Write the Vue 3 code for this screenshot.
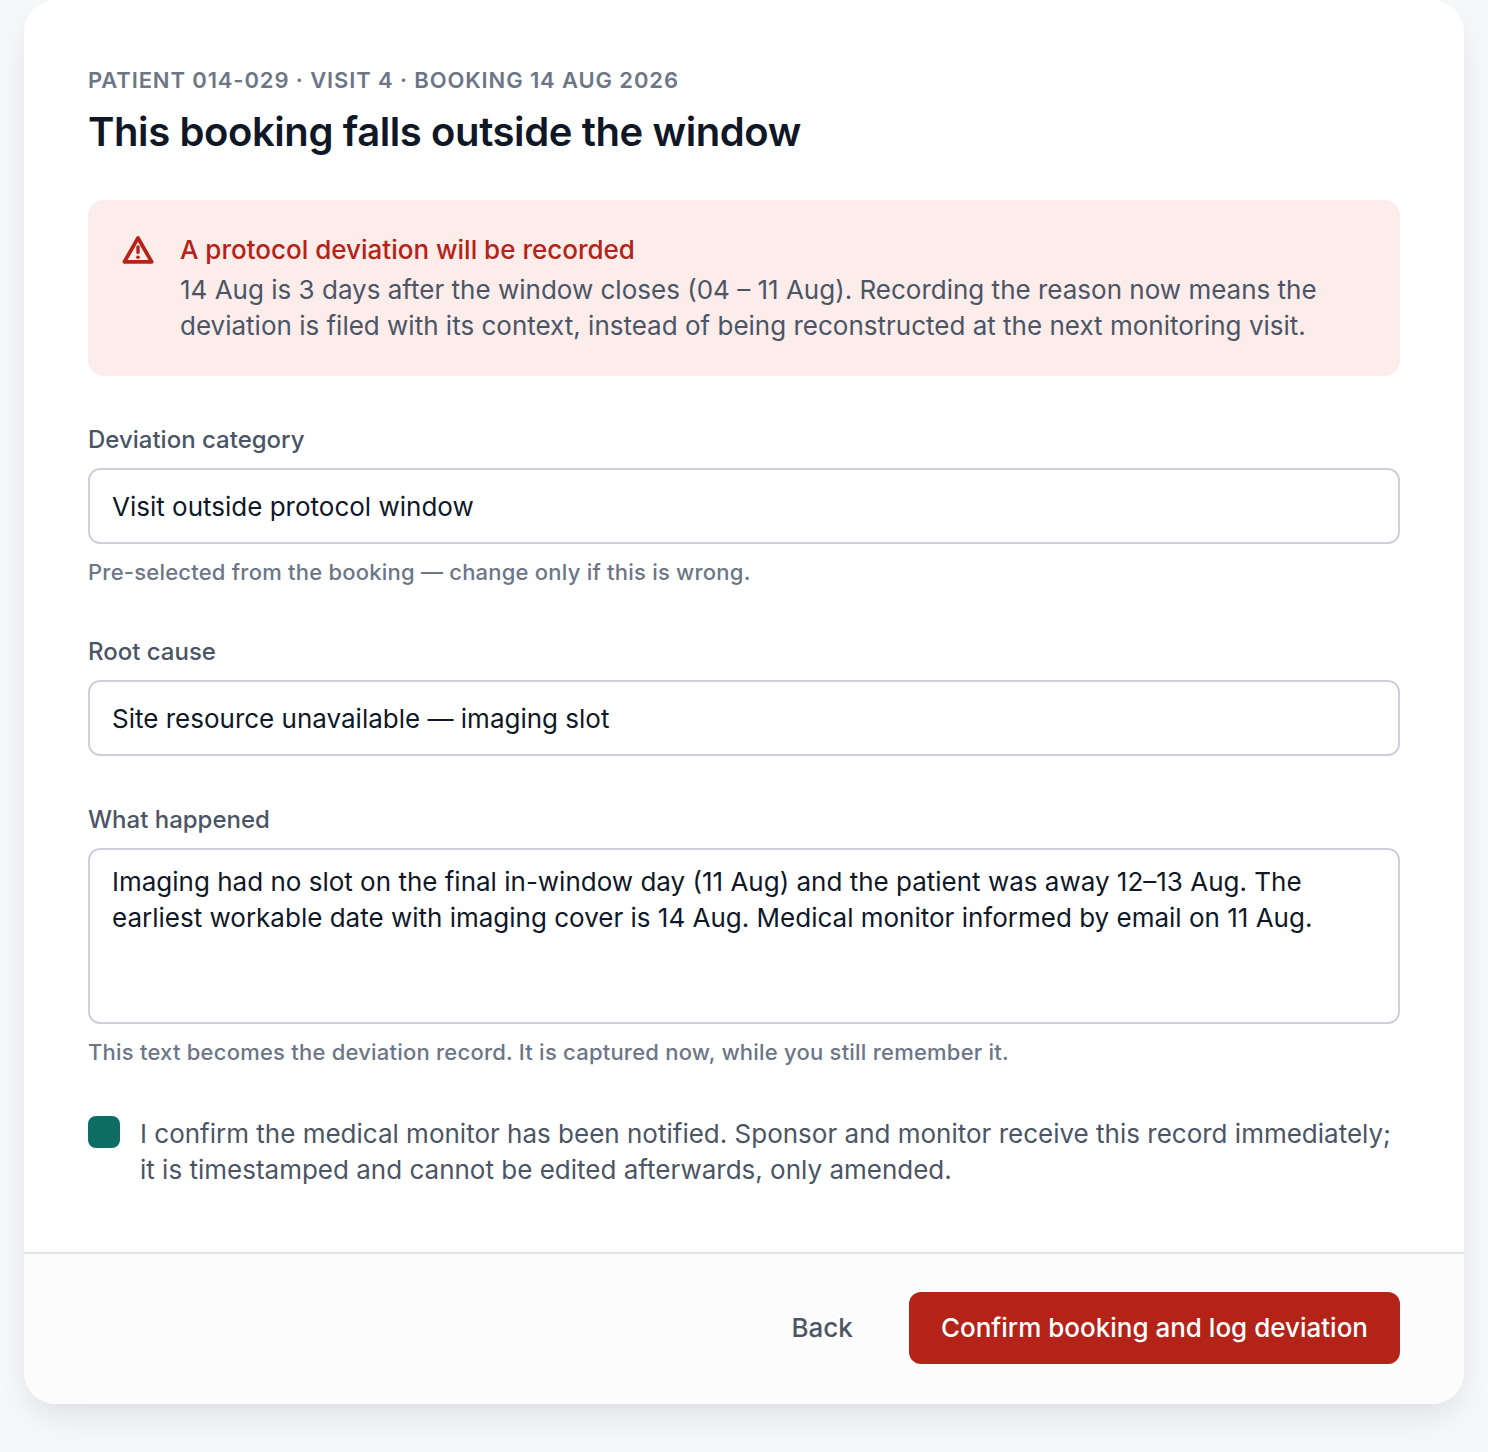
<script setup>
import { ref } from 'vue'

const category = ref('Visit outside protocol window')
const rootCause = ref('Site resource unavailable — imaging slot')
const narrative = ref(
  'Imaging had no slot on the final in-window day (11 Aug) and the patient was away 12–13 Aug. The earliest workable date with imaging cover is 14 Aug. Medical monitor informed by email on 11 Aug.'
)
const confirmed = ref(true)
</script>

<template>
  <main class="page">
    <form class="dialog" aria-labelledby="dialog-title" @submit.prevent>
      <div class="dialog-body">
        <header class="dialog-header">
          <p class="eyebrow">Patient 014-029 · Visit 4 · Booking 14 Aug 2026</p>
          <h1 id="dialog-title" class="title">This booking falls outside the window</h1>
        </header>

        <section class="alert">
          <svg class="alert-icon" viewBox="0 0 24 24" aria-hidden="true">
            <path
              d="M12 4 21.1 19.9H2.9Z"
              fill="none"
              stroke="currentColor"
              stroke-width="2.5"
              stroke-linejoin="round"
            />
            <rect x="10.9" y="8.8" width="2.2" height="5.9" rx="1" fill="currentColor" />
            <circle cx="12" cy="16.8" r="1.2" fill="currentColor" />
          </svg>
          <div class="alert-content">
            <h2 class="alert-title">A protocol deviation will be recorded</h2>
            <p class="alert-text">
              14 Aug is 3 days after the window closes (04 – 11 Aug). Recording the reason now means
              the deviation is filed with its context, instead of being reconstructed at the next
              monitoring visit.
            </p>
          </div>
        </section>

        <div class="field">
          <label for="category" class="field-label">Deviation category</label>
          <input
            id="category"
            v-model="category"
            class="field-control"
            type="text"
            aria-describedby="category-hint"
          />
          <p id="category-hint" class="field-hint">
            Pre-selected from the booking — change only if this is wrong.
          </p>
        </div>

        <div class="field">
          <label for="root-cause" class="field-label">Root cause</label>
          <input id="root-cause" v-model="rootCause" class="field-control" type="text" />
        </div>

        <div class="field">
          <label for="narrative" class="field-label">What happened</label>
          <textarea
            id="narrative"
            v-model="narrative"
            class="field-control field-control-multiline"
            rows="4"
            aria-describedby="narrative-hint"
          />
          <p id="narrative-hint" class="field-hint">
            This text becomes the deviation record. It is captured now, while you still remember it.
          </p>
        </div>

        <div class="confirm">
          <input id="confirm" v-model="confirmed" class="confirm-box" type="checkbox" />
          <label for="confirm" class="confirm-label">
            I confirm the medical monitor has been notified. Sponsor and monitor receive this record
            immediately; it is timestamped and cannot be edited afterwards, only amended.
          </label>
        </div>
      </div>

      <footer class="dialog-footer">
        <button type="button" class="btn btn-ghost">Back</button>
        <button type="submit" class="btn btn-danger">Confirm booking and log deviation</button>
      </footer>
    </form>
  </main>
</template>

<style>
body {
  background-color: #f6f7f9;
}
</style>

<style scoped>
.page {
  padding: 0 24px 48px;
  font-family: Inter, "Liberation Sans", sans-serif;
  font-size: 26px;
  line-height: 36px;
  color: #4b5565;
}

.dialog {
  border-radius: 32px;
  background-color: #ffffff;
  box-shadow: 0 16px 32px -8px rgba(16, 24, 40, 0.12);
  overflow: hidden;
}

.dialog-body {
  display: flex;
  flex-direction: column;
  gap: 48px;
  padding: 64px;
}

.dialog-header {
  display: flex;
  flex-direction: column;
  gap: 8px;
  margin-bottom: -8px;
}

.eyebrow {
  margin: 0;
  font-size: 22px;
  font-weight: 600;
  line-height: 32px;
  letter-spacing: 0.04em;
  text-transform: uppercase;
  color: #6d7687;
}

.title {
  margin: 0;
  font-size: 40px;
  font-weight: 600;
  line-height: 56px;
  letter-spacing: -0.01em;
  color: #101828;
}

.alert {
  display: flex;
  gap: 24px;
  padding: 32px;
  border-radius: 16px;
  background-color: #fcecea;
}

.alert-icon {
  flex: none;
  width: 36px;
  height: 36px;
  color: #b42318;
}

.alert-content {
  display: flex;
  flex-direction: column;
  gap: 4px;
  min-width: 0;
}

.alert-title {
  margin: 0;
  font-size: 26px;
  font-weight: 500;
  color: #b42318;
}

.alert-text {
  margin: 0;
}

.field {
  display: flex;
  flex-direction: column;
  gap: 12px;
}

.field-label {
  font-size: 24px;
  font-weight: 500;
  line-height: 32px;
}

.field-control {
  box-sizing: border-box;
  width: 100%;
  height: 76px;
  padding: 0 22px;
  border: 2px solid #cdd1dc;
  border-radius: 12px;
  background-color: #ffffff;
  font: inherit;
  color: #101828;
}

.field-control:focus {
  outline: none;
  border-color: #0f6e62;
}

.field-control-multiline {
  display: block;
  height: 176px;
  padding: 14px 22px;
  resize: none;
}

.field-hint {
  margin: 0;
  font-size: 22px;
  font-weight: 500;
  line-height: 32px;
  letter-spacing: 0.01em;
  color: #6d7687;
}

.confirm {
  display: flex;
  align-items: flex-start;
  gap: 20px;
}

.confirm-box {
  appearance: none;
  flex: none;
  width: 32px;
  height: 32px;
  margin: 0;
  border: 2px solid #cdd1dc;
  border-radius: 8px;
  background-color: #ffffff;
}

.confirm-box:checked {
  border-color: #0f6e62;
  background-color: #0f6e62;
}

.dialog-footer {
  display: flex;
  justify-content: flex-end;
  gap: 24px;
  padding: 40px 64px;
  background-color: #fcfcfd;
  box-shadow: inset 0 2px #e2e4e9;
}

.btn {
  height: 72px;
  padding: 0 32px;
  border: none;
  border-radius: 12px;
  font: inherit;
  font-weight: 500;
  cursor: pointer;
}

.btn-ghost {
  background-color: transparent;
  color: #4b5565;
}

.btn-danger {
  background-color: #b42318;
  color: #ffffff;
}
</style>
